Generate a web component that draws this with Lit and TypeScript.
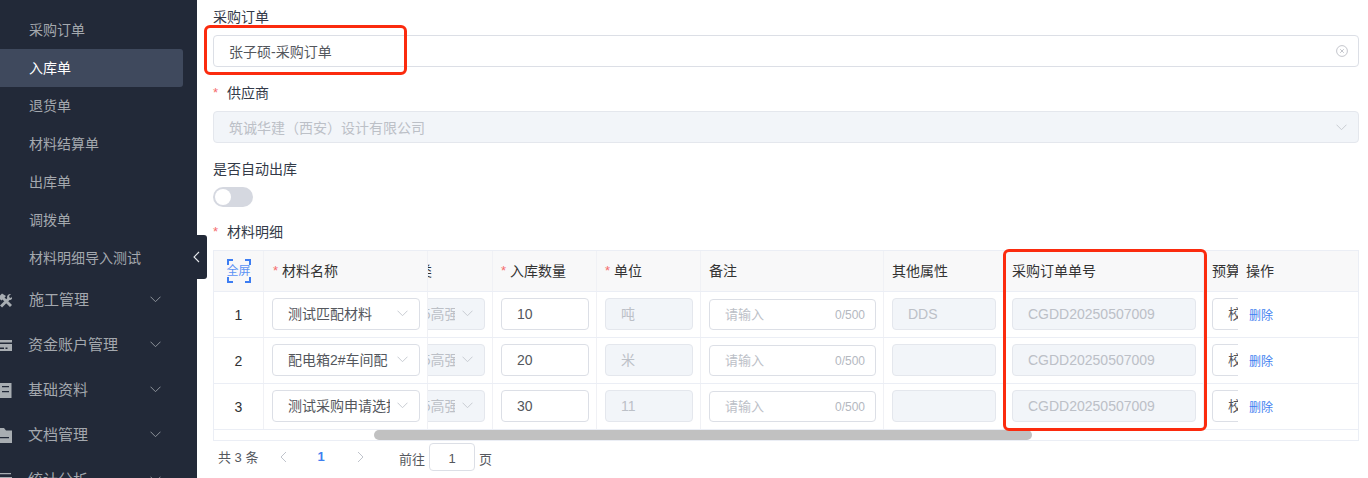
import { LitElement, html, css, svg } from "lit";
import { customElement } from "lit/decorators.js";

const chevron = html`<svg class="chev" viewBox="0 0 11 7" width="11" height="7"><path d="M.5.7 5.500 5.700 10.500.7" fill="none" stroke="currentColor" stroke-width="1"/></svg>`;

const icons: Record<string, unknown> = {
  tools: svg`<path d="M3 13.500 11 5.500M13 13 5 5" stroke="currentColor" stroke-width="3" fill="none"/><path d="M0 4.500 4 .5l4 2.500-4.500 4.500z" fill="currentColor"/><path d="M9 4.500C9 2 11 .5 13 1l-2 2 .5 1.500L13 5l1.500-2c.5 2-1 4.500-3.500 4z" fill="currentColor"/>`,
  card: svg`<path fill-rule="evenodd" d="M0 2h14v11H0zM0 4.500V6h14V4.500zM2 9.500V11h4V9.500zM7.500 9.500V11h2V9.500z" fill="currentColor"/>`,
  doc: svg`<path fill-rule="evenodd" d="M1 0h12.500v15H1zM4 3v1.300h7V3zM4 8v1.300h7V8z" fill="currentColor"/>`,
  folder: svg`<path fill-rule="evenodd" d="M0 0h6l2 2.500h6V15H0zM2 9v1.200h9V9z" fill="currentColor"/>`,
  stats: svg`<path d="M0 0h13v1.300H0zM0 4h14v1.300H0zM0 8h14v1.300H0z" fill="currentColor"/>`,
};

const subItems = ["采购订单", "入库单", "退货单", "材料结算单", "出库单", "调拨单", "材料明细导入测试"];
const groups = [
  { t: "施工管理", i: "tools", h: 45, x: 29 },
  { t: "资金账户管理", i: "card", h: 45, x: 28 },
  { t: "基础资料", i: "doc", h: 45, x: 28 },
  { t: "文档管理", i: "folder", h: 45, x: 28 },
  { t: "统计分析", i: "stats", h: 45, x: 28 },
];
const rows = [
  { n: 1, name: "测试匹配材料", qty: "10", unit: "吨", attr: "DDS" },
  { n: 2, name: "配电箱2#车间配 电箱", qty: "20", unit: "米", attr: "" },
  { n: 3, name: "测试采购申请选择材料", qty: "30", unit: "11", attr: "" },
];
const order = "CGDD20250507009";

@customElement("app-root")
export class AppRoot extends LitElement {
  static styles = css`
    :host { display: block; width: 1368px; height: 478px; overflow: hidden; background: #fff;
      font-family: "Liberation Sans", "Noto Sans CJK SC", sans-serif; font-size: 14px; color: #303133; }
    * { box-sizing: border-box; }
    .page { display: flex; height: 478px; position: relative; overflow: hidden; }

    .side { width: 197px; flex: none; background: #222938; color: #a4a8ae; padding-top: 11px; overflow: hidden; }
    .sub { height: 38px; width: 183px; display: flex; align-items: center; padding: 0 0 2px 29px; border-radius: 0 3px 3px 0; }
    .sub.on { background: #3f495d; color: #fff; }
    .groups { display: flex; flex-direction: column; padding-top: 1px; }
    .group { display: flex; align-items: center; flex: none; color: #a4a8ae; font-size: 15px; }
    .group .ico { width: 14px; height: 15px; margin-left: -2px; color: #a8adb2; flex: none; }
    .group .gt { flex: 1; padding-bottom: 5px; }
    .group .chev { margin: 0 36px 2px 0; color: #8d929a; }

    .main { flex: 1; min-width: 0; padding: 7px 9px 0 16px; }
    .label { height: 20px; line-height: 20px; color: #333a48; display: flex; align-items: center; }
    .label.up { padding-bottom: 1px; }
    .label.dn { padding-top: 2px; }
    .star { color: #f56c6c; width: 14px; font-size: 13px; line-height: 18px; }
    .input { height: 32px; border: 1px solid #dcdfe6; border-radius: 4px; display: flex; align-items: center; padding: 0 10px 1px 15px; color: #54575d; margin: 8px 0 15px; }
    .input .txt { flex: 1; }
    .clear { color: #c4c6cc; margin-top: 1px; }
    .input.dis { background: #f2f5f9; border-color: #e4e7ed; color: #bcc0c7; margin-top: 9px; margin-bottom: 16px; }
    .input.dis .chev { color: #c8ccd2; margin: 1px 1px 0 0; }
    .switch { width: 40px; height: 20px; border-radius: 10px; background: #d5d8e0; padding: 2px; margin: 8px 0 14px; }
    .knob { width: 16px; height: 16px; border-radius: 50%; background: #fff; }
    .label.tl { margin-bottom: 9px; }

    .table { border: 1px solid #ebeef5; height: 191px; display: flex; flex-direction: column; }
    .panes { display: flex; height: 179px; flex: none; }
    .pane { flex: none; display: flex; flex-direction: column; }
    .pane.l { width: 214px; }
    .pane.m { width: 810px; overflow: hidden; }
    .pane.r { width: 120px; }
    .inner { margin-left: -60px; display: flex; flex-direction: column; }
    .tr { display: flex; height: 46px; border-bottom: 1px solid #ebeef5; flex: none; }
    .tr.head { height: 41px; background: #f8f8f9; color: #333; }
    .td { flex: none; display: flex; align-items: center; padding: 0 7px 2px 8px; border-right: 1px solid #f0f1f5; overflow: hidden; white-space: nowrap; line-height: 20px; }
    .head .td { padding-bottom: 0; }
    .pane.r .td { border-right: none; flex: 1; }
    .w-idx { width: 50px; justify-content: center; }
    .w-name { width: 164px; }
    .head .w-name { padding-left: 9px; }
    .w-type { width: 125px; }
    .w-qty, .w-unit { width: 104px; }
    .w-note { width: 183px; }
    .w-attr { width: 120px; }
    .w-order { width: 200px; }
    .w-budget { width: 120px; border-right: none; }
    .td.idx { color: #303133; font-size: 14px; padding: 0; }
    .req { color: #f56c6c; font-size: 13px; margin-right: 4px; line-height: 16px; }
    .fs { position: relative; width: 24px; height: 24px; display: grid; place-items: center; color: #3d7df2; }
    .fs svg { position: absolute; inset: 0; }
    .fs span { font-size: 12px; color: #5c93f5; white-space: nowrap; }

    .ctl { height: 32px; border: 1px solid #dcdfe6; border-radius: 4px; display: flex; align-items: center; padding: 1px 0 0 15px; width: 100%; color: #54575d; overflow: hidden; flex: none; line-height: 20px; }
    .ctl.dis { background: #f2f5f9; border-color: #e4e7ed; color: #bcc0c7; }
    .ctl.type { padding-left: 20px; }
    .ctl .clip { flex: 1; overflow: hidden; white-space: nowrap; min-width: 0; }
    .ctl .chev { margin: 0 11px 1px 7px; color: #c8ccd2; flex: none; }
    .note { height: 31px; margin-top: 1px; padding-right: 10px; color: #bcc0c7; font-size: 13px; }
    .note .count { font-size: 12px; color: #b4b8bf; }
    .budget { width: 120px; }
    .del { color: #3f7ff0; font-size: 12px; padding: 4px 0 0 3px; }

    .track { height: 10px; flex: none; }
    .thumb { height: 10px; width: 658px; margin-left: 160px; background: #c1c1c1; border-radius: 5px; }

    .pager { display: flex; align-items: center; height: 28px; margin-top: 2px; font-size: 13px; color: #55585e; padding-left: 5px; }
    .total { width: 56px; padding-bottom: 2px; }
    .arrow { color: #c0c4cc; flex: none; }
    .pnum { color: #3f7ff0; font-weight: 700; width: 8px; text-align: center; margin: 0 32px 0 30px; padding-bottom: 2px; }
    .goto { margin-left: 35px; padding-top: 2px; }
    .pinput { width: 46px; height: 28px; border: 1px solid #dcdfe6; border-radius: 4px; display: grid; place-items: center; margin: 0 4px; color: #54575d; padding-top: 2px; }
    .pend { padding-top: 2px; }

    .mark { position: absolute; border: 3px solid #fb2b0e; border-radius: 6px; pointer-events: none; }
    .m1 { left: 204px; top: 25px; width: 203px; height: 50px; }
    .m2 { left: 1003px; top: 249px; width: 204px; height: 182px; }
    .tab { position: absolute; left: 186px; top: 235px; width: 21px; height: 44px; background: #222938; border-radius: 0 3px 3px 0; display: grid; place-items: center; color: #e6e8ec; }
  `;

  private cell(r: (typeof rows)[number]) {
    return html`<div class="tr">
      <div class="td w-type"><div class="ctl dis type"><span class="clip">C355高强度钢材</span>${chevron}</div></div>
      <div class="td w-qty"><div class="ctl">${r.qty}</div></div>
      <div class="td w-unit"><div class="ctl dis">${r.unit}</div></div>
      <div class="td w-note"><div class="ctl note"><span class="clip">请输入</span><span class="count">0/500</span></div></div>
      <div class="td w-attr"><div class="ctl dis">${r.attr}</div></div>
      <div class="td w-order"><div class="ctl dis">${order}</div></div>
      <div class="td w-budget"><div class="ctl budget">校验预算</div></div>
    </div>`;
  }

  render() {
    return html`<div class="page">
      <aside class="side">
        ${subItems.map((s, i) => html`<div class="sub ${i === 1 ? "on" : ""}">${s}</div>`)}
        <div class="groups">
          ${groups.map(g => html`<div class="group" style="height:${g.h}px">
            <svg class="ico" viewBox="0 0 14 15" style="margin-right:${g.x - 12}px">${icons[g.i]}</svg>
            <span class="gt">${g.t}</span>${chevron}
          </div>`)}
        </div>
      </aside>
      <main class="main">
        <div class="label">采购订单</div>
        <div class="input"><span class="txt">张子硕-采购订单</span>
          <svg class="clear" viewBox="0 0 12 12" width="12" height="12"><circle cx="6" cy="6" r="5.400" fill="none" stroke="currentColor"/><path d="M4.200 4.200l3.600 3.600m0-3.600L4.200 7.800" stroke="currentColor"/></svg>
        </div>
        <div class="label dn"><span class="star">*</span>供应商</div>
        <div class="input dis"><span class="txt">筑诚华建（西安）设计有限公司</span>${chevron}</div>
        <div class="label up">是否自动出库</div>
        <div class="switch"><div class="knob"></div></div>
        <div class="label tl dn"><span class="star">*</span>材料明细</div>
        <div class="table">
          <div class="panes">
            <div class="pane l">
              <div class="tr head">
                <div class="td w-idx idx"><div class="fs">
                  <svg viewBox="0 0 24 24" width="24" height="24"><path d="M6 1H1v5M18 1h5v5M6 23H1v-5M18 23h5v-5" fill="none" stroke="currentColor" stroke-width="2"/></svg>
                  <span>全屏</span></div></div>
                <div class="td w-name"><span class="req">*</span>材料名称</div>
              </div>
              ${rows.map(r => html`<div class="tr">
                <div class="td w-idx idx">${r.n}</div>
                <div class="td w-name"><div class="ctl"><span class="clip">${r.name}</span>${chevron}</div></div>
              </div>`)}
            </div>
            <div class="pane m"><div class="inner">
              <div class="tr head">
                <div class="td w-type">材料分类</div>
                <div class="td w-qty"><span class="req">*</span>入库数量</div>
                <div class="td w-unit"><span class="req">*</span>单位</div>
                <div class="td w-note">备注</div>
                <div class="td w-attr">其他属性</div>
                <div class="td w-order">采购订单单号</div>
                <div class="td w-budget">预算科目</div>
              </div>
              ${rows.map(r => this.cell(r))}
            </div></div>
            <div class="pane r">
              <div class="tr head"><div class="td">操作</div></div>
              ${rows.map(() => html`<div class="tr"><div class="td"><span class="del">删除</span></div></div>`)}
            </div>
          </div>
          <div class="track"><div class="thumb"></div></div>
        </div>
        <div class="pager">
          <span class="total">共 3 条</span>
          <svg class="arrow" viewBox="0 0 7 12" width="7" height="12" style="margin-left:6px"><path d="M6 1 1 6l5 5" fill="none" stroke="currentColor"/></svg>
          <span class="pnum">1</span>
          <svg class="arrow" viewBox="0 0 7 12" width="7" height="12"><path d="m1 1 5 5-5 5" fill="none" stroke="currentColor"/></svg>
          <span class="goto">前往</span><span class="pinput">1</span><span class="pend">页</span>
        </div>
      </main>
      <div class="mark m1"></div>
      <div class="mark m2"></div>
      <div class="tab"><svg viewBox="0 0 7 12" width="7" height="12"><path d="M6 1 1 6l5 5" fill="none" stroke="currentColor" stroke-width="1.100"/></svg></div>
    </div>`;
  }
}
